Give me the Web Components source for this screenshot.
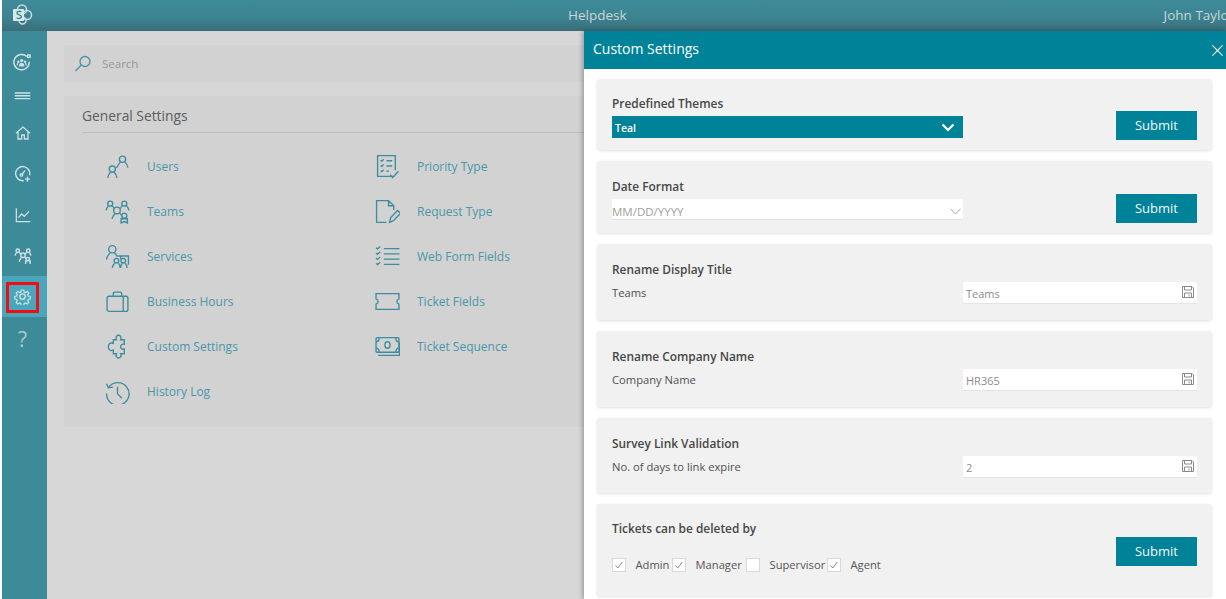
<!DOCTYPE html>
<html>
<head>
<meta charset="utf-8">
<title>Helpdesk</title>
<style>
  html, body { margin: 0; height: 100%; overflow: hidden; background: #fff; }
  body { font-family: "Open Sans", "Liberation Sans", sans-serif; }
</style>
</head>
<body>
<app-shell>
  <top-bar slot="top" heading="Helpdesk" user="John Taylor"></top-bar>
  <side-rail slot="rail"></side-rail>
  <settings-page slot="main"></settings-page>
  <custom-panel slot="panel" heading="Custom Settings">
    <setting-card heading="Predefined Themes" style="--pad-top:16px;--pad-bottom:12px;--gap:5px">
      <theme-select value="Teal" variant="filled"></theme-select>
      <submit-button slot="action" style="margin-bottom:-2px"></submit-button>
    </setting-card>
    <setting-card heading="Date Format" style="--pad-top:17px;--pad-bottom:13px;--gap:5px">
      <theme-select value="MM/DD/YYYY"></theme-select>
      <submit-button slot="action" style="margin-bottom:-3px"></submit-button>
    </setting-card>
    <setting-card heading="Rename Display Title" style="--pad-top:17px;--pad-bottom:16px;--gap:5px">
      <save-field label="Teams" value="Teams"></save-field>
    </setting-card>
    <setting-card heading="Rename Company Name" style="--pad-top:17px;--pad-bottom:16px;--gap:5px">
      <save-field label="Company Name" value="HR365"></save-field>
    </setting-card>
    <setting-card heading="Survey Link Validation" style="--pad-top:17px;--pad-bottom:15px;--gap:5px">
      <save-field label="No. of days to link expire" value="2"></save-field>
    </setting-card>
    <setting-card heading="Tickets can be deleted by" style="--pad-top:16px;--pad-bottom:23px;--gap:21px">
      <role-checks></role-checks>
      <submit-button slot="action" style="margin-bottom:7px"></submit-button>
    </setting-card>
  </custom-panel>
</app-shell>

<script>
const ICONS = {
  users: '<circle cx="7" cy="14.5" r="3"/><circle cx="16.8" cy="5" r="3"/><path d="M2.500 23c.4-2.500 1.500-4.400 3-5.700M11.500 23c-.4-2.500-1.500-4.400-3-5.700M11 13.500c1-2 2.300-4 3.800-5.700M22 13c-.4-2-1.300-3.800-2.800-5.200"/>',
  teams: '<circle cx="5" cy="4.500" r="2.400"/><circle cx="18.500" cy="4.500" r="2.400"/><circle cx="11.500" cy="11" r="3.200"/><circle cx="18.500" cy="16" r="2.400"/><path d="M1 11c.3-1.700 1-3 2.300-4.400M7 6.600c.8.800 1.300 1.700 1.700 2.600M23 11c-.3-1.700-1-3-2.300-4.400M16.500 6.600c-.8.800-1.300 1.700-1.700 2.600M6.800 19c.5-2 1.300-3.300 2.500-4.600M14.500 14c.6.500 1 1.100 1.300 1.700M15.500 23v-4h6v4l-3-1.300z"/>',
  services: '<circle cx="7" cy="5" r="3.500"/><path d="M1.500 15c.3-2.500 1.700-5 3.500-6.400M9 8.500c1 .8 1.800 1.800 2.400 3h11.100v8.500M15 11.500v3"/><circle cx="11" cy="16" r="2.200"/><circle cx="17.500" cy="16" r="2.200"/><path d="M7 23c.3-2 1-3.300 2.200-4.500M13 18.500c1 1 1.300 2.500 1.500 4.500M15 23c.1-2 .6-3.400 1.500-4.500M19.500 18.500c1 1 1.500 2.500 1.700 4.500"/>',
  briefcase: '<rect x="2" y="7" width="20" height="14.500" rx="1.800"/><path d="M8 7V4.500c0-1 .6-1.500 1.500-1.500h5c.9 0 1.500.5 1.500 1.500V7M17.500 7v14.500"/>',
  puzzle: '<path d="M8 5.500h3c-1.200-2.800.6-4.300 2-4.300s3.200 1.500 2 4.300h3.500V10c-2.300-.8-3.500.7-3.500 2.200s1.200 3 3.500 2.200V19H15c1.200 2.600-.6 4-2 4s-3.200-1.400-2-4H8v-3.500c-2.800 1.200-4.800-.4-4.800-3.200S5.200 7.800 8 9z"/>',
  history: '<path d="M3.200 8.500A10.800 10.800 0 1 1 1.500 14M1.500 4.500l1.700 4 4.300-.7M12 7.500v6.500l4 4.500"/>',
  priority: '<path d="M17.500 21.500H2.500V1.500h17v14"/><path d="M5.500 6l1 1 1.800-2M11 6.500h5.500M5.500 11l1 1 1.800-2M11 11.500h5.500M5.500 16l1 1 1.800-2M11 16.500h2.500M14.500 20l2.500 2.500 5.500-6"/>',
  request: '<path d="M11 22.500H1.500V1.500h11.500l5 5v4M13 1.500v5h5M14 22.500l1-4.500 6.500-7 3 2.500-6.500 7.200z"/>',
  webform: '<path d="M8.500 4.500h15M8.500 9.500h15M8.500 14.500h15M8.500 19.500h15M1 3.500l1.300 1.300L5 2.500M1 8.500l1.300 1.300L5 7.500M1 13.500l1.300 1.300L5 12.500M1 18.500l1.300 1.300L5 17.500"/>',
  ticket: '<path d="M1 4.500h22v5c-1.300.5-2 1.300-2 2.500s.7 2 2 2.500v5H1v-5c1.300-.5 2-1.300 2-2.500s-.7-2-2-2.500z"/>',
  sequence: '<rect x="1" y="3.500" width="22" height="14" rx="1"/><path d="M1 7.500c2 0 3-1.500 3-4M23 7.500c-2 0-3-1.500-3-4M1 13.500c2 0 3 1.500 3 4M23 13.500c-2 0-3 1.500-3 4M3 20.500h20.500V8"/><ellipse cx="12" cy="10.500" rx="2.500" ry="3.200"/>'
};

const RAIL_ICONS = {
  people: '<path d="M17.500 4.500A9.700 9.700 0 1 0 20.500 11"/><circle cx="20" cy="4" r="1.800"/><g fill="currentColor" stroke="none"><circle cx="11" cy="9.500" r="2"/><circle cx="6.800" cy="11" r="1.500"/><circle cx="15.200" cy="11" r="1.500"/><path d="M7.500 17c0-3 1.500-4.800 3.500-4.800s3.500 1.800 3.500 4.800zM4.500 15.500c0-2 .8-3.300 2-3.300l.6.300c-.7 1-1 2-1.100 3zM17.500 15.500c0-2-.8-3.300-2-3.300l-.6.300c.7 1 1 2 1.100 3z"/></g>',
  menu: '<path d="M1 7h22M1 11h22M1 15h22"/>',
  home: '<path d="M1.500 12.500L12 3l10.500 9.500M4.500 10.500V21H10v-6h4v6h5.500V10.500"/>',
  gauge: '<path d="M14 22a10 10 0 1 1 8-7.500M11 14l4.500-6.500"/><circle cx="10.500" cy="14" r="1.800"/><path d="M19 16.500v7M15.500 20h7"/>',
  chart: '<path d="M2 2v20h21M5 16l5-5.500 4 3.500 7-7.500"/>',
  org: '<circle cx="5" cy="5" r="2.300"/><circle cx="19" cy="5" r="2.300"/><circle cx="12" cy="11" r="3"/><circle cx="18.500" cy="16" r="2.200"/><path d="M1.500 11.500c.3-1.700 1-3 2-4.300M7 7c.8.800 1.300 1.500 1.800 2.600M22.500 11.500c-.3-1.700-1-3-2-4.300M17 7c-.8.800-1.300 1.500-1.800 2.600M7 19.500c.4-2 1.200-3.500 2.500-5M14.500 14c.5.500 1 1 1.300 1.800M15.500 22.500v-4h6v4"/>',
  gear: '<circle cx="12" cy="12" r="3.800"/><path d="M10 1.500h4l.7 3.200 2 .9 2.800-1.800 2.700 2.700-1.800 2.800.9 2 3.200.7v4l-3.200.7-.9 2 1.800 2.800-2.700 2.700-2.800-1.800-2 .9-.7 3.200h-4l-.7-3.200-2-.9-2.800 1.800-2.700-2.700 1.800-2.800-.9-2-3.200-.7v-4l3.200-.7.9-2-1.800-2.800 2.700-2.700 2.800 1.800 2-.9z" transform="translate(1.500 1.500) scale(.875)"/>'
};

class AppShell extends HTMLElement {
  constructor() {
    super();
    this.attachShadow({ mode: 'open' }).innerHTML = `
      <style>
        :host { display: grid; position: relative; height: 599px; margin-left: 2px; overflow: hidden;
          grid-template: 31px 1fr / 45px 1fr; background: #d7d7d7; }
        ::slotted([slot=top]) { grid-column: 1 / 3; grid-row: 1; }
        ::slotted([slot=rail]) { grid-column: 1; grid-row: 2; }
        ::slotted([slot=main]) { grid-column: 2; grid-row: 2; min-width: 0; }
        ::slotted([slot=panel]) { position: absolute; top: 31px; right: 0; bottom: 0; width: 642px; }
      </style>
      <slot name="top"></slot><slot name="rail"></slot><slot name="main"></slot><slot name="panel"></slot>`;
  }
}

class TopBar extends HTMLElement {
  connectedCallback() {
    this.attachShadow({ mode: 'open' }).innerHTML = `
      <style>
        :host { display: flex; align-items: center; height: 31px; box-sizing: border-box; padding-bottom: 2px; overflow: hidden; color: #c9d5d8;
          background: linear-gradient(#3f8b99 0, #3c8492 55%, #3a6d78 100%); font-size: 13.500px; white-space: nowrap; }
        .logo { width: 40px; flex: none; margin-right: 526px; display: flex; justify-content: center; box-sizing: border-box; }
        span { flex: none; }
        .name { margin-left: 537px; }
      </style>
      <div class="logo">
        <svg width="22" height="22" viewBox="0 0 22 22">
          <circle cx="11" cy="5.500" r="4.500" fill="none" stroke="#c9dde1" stroke-width="1.500"/>
          <circle cx="16" cy="11" r="4.500" fill="none" stroke="#c9dde1" stroke-width="1.500"/>
          <circle cx="11.500" cy="16.500" r="3.500" fill="none" stroke="#c9dde1" stroke-width="1.500"/>
          <rect x="2" y="5" width="11" height="12" rx="1" fill="#dbe8ea"/>
          <path d="M10.500 7.800c-1.500-.9-4.500-.8-4.500 1.200 0 2.200 4.400 1.500 4.400 3.700 0 1.900-3 2.100-4.800 1.100" fill="none" stroke="#3d8a99" stroke-width="1.500"/>
        </svg>
      </div>
      <span>${this.getAttribute('heading')}</span>
      <span class="name">${this.getAttribute('user')}</span>`;
  }
}

class SideRail extends HTMLElement {
  connectedCallback() {
    const items = [
      ['people', 50, 12, 19],
      ['menu', 31, 0, 17],
      ['home', 41, 1, 16],
      ['gauge', 41, 0, 17],
      ['chart', 41, 0, 16],
      ['org', 41, 0, 18],
      ['gear', 41, 0, 17]
    ];
    this.attachShadow({ mode: 'open' }).innerHTML = `
      <style>
        :host { display: block; background: #3d8a99; color: #cfe2e6; }
        .item { display: flex; align-items: center; justify-content: center; position: relative; padding-right: 4px; box-sizing: border-box; }
        svg { fill: none; stroke: currentColor; stroke-width: 1.900; display: block; }
        .active { background: #4aa6ba; }
        .active::after { content: ""; position: absolute; left: 4px; top: 6px; width: 27px; height: 25px; border: 3px solid #ee0f14; }
        .help { height: 42px; padding: 2px 4px 0 0; box-sizing: border-box; display: flex; align-items: center; justify-content: center; font-size: 21px; color: #a9cbd2; }
      </style>
      ${items.map(([name, h, pad, size]) => `
        <div class="item ${name === 'gear' ? 'active' : ''}" style="height:${h}px;padding-top:${pad}px">
          <svg width="${size}" height="${size}" viewBox="0 0 24 24">${RAIL_ICONS[name]}</svg>
        </div>`).join('')}
      <div class="help">?</div>`;
  }
}

class SettingLink extends HTMLElement {
  connectedCallback() {
    this.attachShadow({ mode: 'open' }).innerHTML = `
      <style>
        :host { display: flex; align-items: center; height: 45px; color: #4a97a9; font-size: 12px; }
        .ico { width: 65px; box-sizing: border-box; padding-left: 23px; flex: none; }
        svg { fill: none; stroke: #3e8d9e; stroke-width: 1.300; display: block; }
        span { white-space: nowrap; }
      </style>
      <div class="ico"><svg width="25" height="25" viewBox="0 0 24 24">${ICONS[this.getAttribute('icon')]}</svg></div>
      <span><slot></slot></span>`;
  }
}

class SettingsPage extends HTMLElement {
  connectedCallback() {
    const left = [['users', 'Users'], ['teams', 'Teams'], ['services', 'Services'], ['briefcase', 'Business Hours'], ['puzzle', 'Custom Settings'], ['history', 'History Log']];
    const right = [['priority', 'Priority Type'], ['request', 'Request Type'], ['webform', 'Web Form Fields'], ['ticket', 'Ticket Fields'], ['sequence', 'Ticket Sequence']];
    const col = list => list.map(([i, t]) => `<setting-link icon="${i}">${t}</setting-link>`).join('');
    this.attachShadow({ mode: 'open' }).innerHTML = `
      <style>
        :host { display: block; padding: 14px 0 0 17px; }
        .search { height: 37px; background: #d2d2d2; display: flex; align-items: center; padding-left: 10px; gap: 10px;
          color: #8f9a9c; font-size: 11.500px; }
        .search svg { fill: none; stroke: #4b93a3; stroke-width: 1.300; display: block; }
        .card { margin-top: 14px; height: 331px; box-sizing: border-box; background: #d2d2d2; padding: 9px 0 0 18px; }
        h2 { margin: 0; font-weight: 400; font-size: 13.800px; line-height: 22px; color: #5d5d5d; padding-bottom: 5px;
          border-bottom: 1px solid #bcbcbc; }
        .cols { display: grid; grid-template-columns: 270px 1fr; margin-top: 11px; }
      </style>
      <div class="search">
        <svg width="18" height="18" viewBox="0 0 18 18"><circle cx="11" cy="6.500" r="5"/><path d="M7.300 10L1.500 16"/></svg>
        <span>Search</span>
      </div>
      <div class="card">
        <h2>General Settings</h2>
        <div class="cols"><div>${col(left)}</div><div>${col(right)}</div></div>
      </div>`;
  }
}

class CustomPanel extends HTMLElement {
  connectedCallback() {
    const root = this.attachShadow({ mode: 'open' });
    root.innerHTML = `
      <style>
        :host { display: flex; flex-direction: column; background: #fff; box-shadow: -2px 0 4px rgba(0,0,0,.25); overflow: hidden; }
        header { height: 38px; flex: none; box-sizing: border-box; background: #008299; color: #fff; display: flex; align-items: center;
          justify-content: space-between; padding: 0 3px 3px 9px; font-size: 14px; }
        .list { display: flex; flex-direction: column; gap: 11px; padding: 10px 14px 0 13px; }
        svg { stroke: #fff; stroke-width: 1.300; fill: none; display: block; margin-top: 4px; }
      </style>
      <header>
        <span>${this.getAttribute('heading')}</span>
        <svg width="11" height="11" viewBox="0 0 13 13"><path d="M.5.500l12 12M12.500.500l-12 12"/></svg>
      </header>
      <div class="list"><slot></slot></div>`;
  }
}

class SettingCard extends HTMLElement {
  connectedCallback() {
    this.attachShadow({ mode: 'open' }).innerHTML = `
      <style>
        :host { display: flex; align-items: flex-end; justify-content: space-between; background: #f1f1f1; border-radius: 3px;
          box-shadow: 0 1px 3px rgba(0,0,0,.12); padding: var(--pad-top) 15px var(--pad-bottom); }
        .body { flex: 1; min-width: 0; }
        h3 { margin: 0 0 var(--gap); font-size: 11.900px; line-height: 16px; font-weight: 600; color: #474747; }
        ::slotted([slot=action]) { flex: none; }
      </style>
      <div class="body"><h3>${this.getAttribute('heading')}</h3><slot></slot></div>
      <slot name="action"></slot>`;
  }
}

class ThemeSelect extends HTMLElement {
  connectedCallback() {
    const filled = this.getAttribute('variant') === 'filled';
    this.attachShadow({ mode: 'open' }).innerHTML = `
      <style>
        :host { display: flex; align-items: center; justify-content: space-between; width: 351px; box-sizing: border-box;
          height: ${filled ? 22 : 21}px; background: ${filled ? '#008299' : '#fff'}; color: ${filled ? '#fff' : '#a0a0a0'};
          font-size: ${filled ? 10.5 : 11.5}px; font-weight: ${filled ? 600 : 400}; padding: ${filled ? '0 8px 0 3px' : '0 2px 0 0'};
          ${filled ? '' : 'border-bottom: 1px solid #e0e0e0;'} }
        span { padding-top: ${filled ? 2 : 5}px; }
        svg { fill: none; display: block; margin-top: ${filled ? 0 : 5}px; }
      </style>
      <span>${this.getAttribute('value')}</span>
      ${filled
        ? '<svg width="14" height="9" viewBox="0 0 14 9"><path d="M1.500 1.500L7 7l5.500-5.500" stroke="#fff" stroke-width="2.200"/></svg>'
        : '<svg width="11" height="7" viewBox="0 0 11 7"><path d="M.5.800L5.500 6l5-5.200" stroke="#aaa" stroke-width="1"/></svg>'}`;
  }
}

class SubmitButton extends HTMLElement {
  connectedCallback() {
    this.attachShadow({ mode: 'open' }).innerHTML = `
      <style>
        :host { display: flex; align-items: center; justify-content: center; width: 81px; height: 29px; box-sizing: border-box; padding-bottom: 2px;
          background: #008299; color: #f2f7f8; font-size: 13px; }
      </style>
      Submit`;
  }
}

class SaveField extends HTMLElement {
  connectedCallback() {
    this.attachShadow({ mode: 'open' }).innerHTML = `
      <style>
        :host { display: flex; align-items: center; justify-content: space-between; font-size: 11.200px; color: #505050; }
        .label { padding-bottom: 2px; }
        .input { width: 234px; height: 22px; box-sizing: border-box; background: #fff; border-bottom: 1px solid #e4e4e4;
          display: flex; align-items: center; justify-content: space-between; padding: 1px 3px 0; color: #8c8c8c; font-size: 11px; }
        svg { fill: none; stroke: #8a8a8a; stroke-width: 1; display: block; margin-top: -2px; }
      </style>
      <span class="label">${this.getAttribute('label')}</span>
      <div class="input">
        <span>${this.getAttribute('value')}</span>
        <svg width="12" height="12" viewBox="0 0 12 12"><path d="M.5.500h9.500l1.500 1.500v9.500H.5zM2.500.500v3.500h7V.500M2.500 11.500V7h7v4.500"/><path d="M7 8.500v2"/></svg>
      </div>`;
  }
}

class RoleChecks extends HTMLElement {
  connectedCallback() {
    const roles = [['Admin', true, 60], ['Manager', true, 74], ['Supervisor', false, 81], ['Agent', true, 60]];
    this.attachShadow({ mode: 'open' }).innerHTML = `
      <style>
        :host { display: flex; font-size: 11.200px; color: #555; height: 16px; }
        label { display: flex; align-items: center; gap: 9.500px; white-space: nowrap; }
        label span:last-child { padding-bottom: 2px; }
        .box { width: 14px; height: 14px; background: #fff; border: 1px solid #d9d9d9; box-sizing: border-box; flex: none; }
        svg { display: block; fill: none; stroke: #8a8a8a; stroke-width: 1; }
      </style>
      ${roles.map(([name, on, w]) => `
        <label style="width:${w}px">
          <span class="box">${on ? '<svg width="12" height="12" viewBox="0 0 12 12"><path d="M2.500 6.500l2.300 2.500 4.500-6"/></svg>' : ''}</span>
          <span>${name}</span>
        </label>`).join('')}`;
  }
}

customElements.define('app-shell', AppShell);
customElements.define('top-bar', TopBar);
customElements.define('side-rail', SideRail);
customElements.define('setting-link', SettingLink);
customElements.define('settings-page', SettingsPage);
customElements.define('custom-panel', CustomPanel);
customElements.define('setting-card', SettingCard);
customElements.define('theme-select', ThemeSelect);
customElements.define('submit-button', SubmitButton);
customElements.define('save-field', SaveField);
customElements.define('role-checks', RoleChecks);
</script>
</body>
</html>
